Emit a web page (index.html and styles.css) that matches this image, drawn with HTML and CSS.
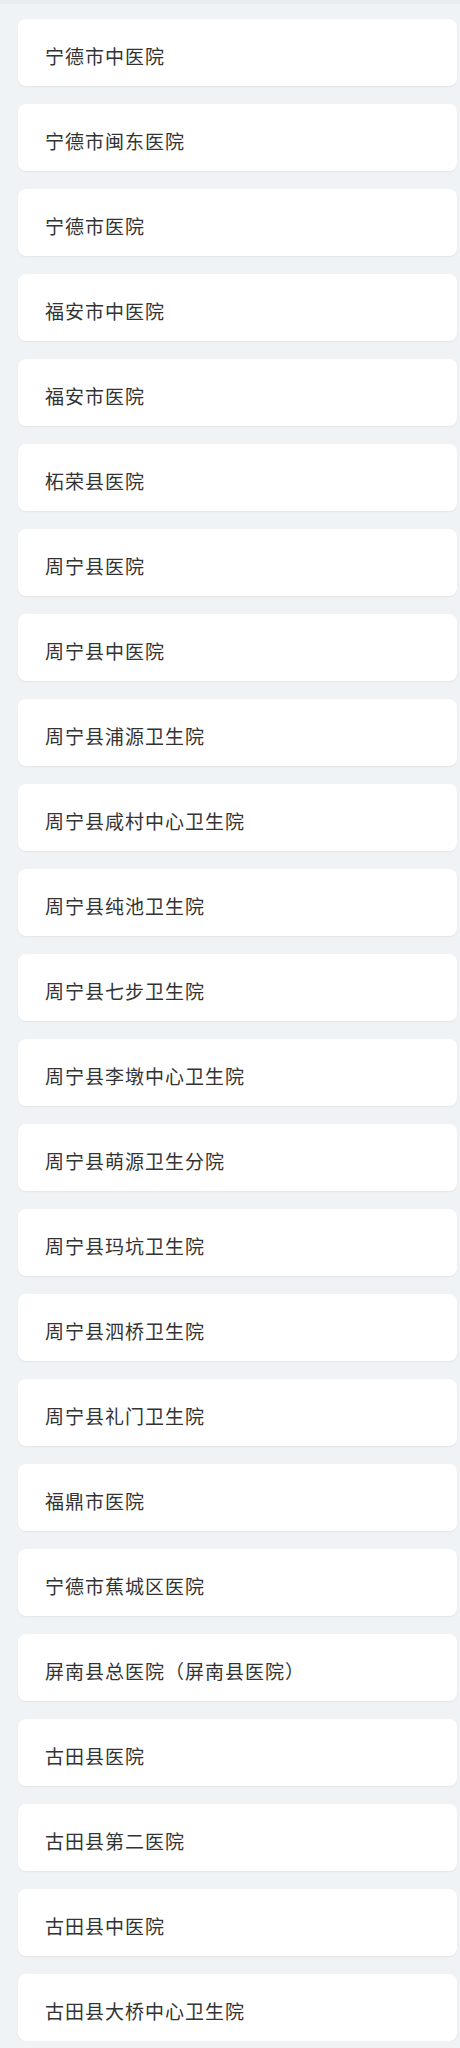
FILE: index.html
```html
<!DOCTYPE html>
<html lang="zh-CN">
<head>
<meta charset="utf-8">
<link rel="stylesheet" href="styles.css">
</head>
<body>
<div class="topbar"></div>
<ul class="list">
<li class="card">宁德市中医院</li>
<li class="card">宁德市闽东医院</li>
<li class="card">宁德市医院</li>
<li class="card">福安市中医院</li>
<li class="card">福安市医院</li>
<li class="card">柘荣县医院</li>
<li class="card">周宁县医院</li>
<li class="card">周宁县中医院</li>
<li class="card">周宁县浦源卫生院</li>
<li class="card">周宁县咸村中心卫生院</li>
<li class="card">周宁县纯池卫生院</li>
<li class="card">周宁县七步卫生院</li>
<li class="card">周宁县李墩中心卫生院</li>
<li class="card">周宁县萌源卫生分院</li>
<li class="card">周宁县玛坑卫生院</li>
<li class="card">周宁县泗桥卫生院</li>
<li class="card">周宁县礼门卫生院</li>
<li class="card">福鼎市医院</li>
<li class="card">宁德市蕉城区医院</li>
<li class="card">屏南县总医院（屏南县医院）</li>
<li class="card">古田县医院</li>
<li class="card">古田县第二医院</li>
<li class="card">古田县中医院</li>
<li class="card">古田县大桥中心卫生院</li>
</ul>
</body>
</html>
```
FILE: styles.css
```css
html, body {
  margin: 0;
  padding: 0;
  background: #f0f3f6;
}
body {
  font-family: "Noto Sans CJK SC", "Noto Sans", sans-serif;
  color: #333;
}
.topbar {
  height: 4px;
  background: #e9edf1;
}
.list {
  list-style: none;
  margin: 0;
  padding: 15px 3px 0 18px;
  display: flex;
  flex-direction: column;
  gap: 18px;
}
.card {
  height: 67px;
  box-sizing: border-box;
  background: #fff;
  border-radius: 8px;
  box-shadow: 0 1px 2px rgba(0, 0, 0, 0.06);
  display: flex;
  align-items: center;
  padding: 5px 0 0 27px;
  font-size: 19px;
  line-height: 1;
  letter-spacing: 1px;
}
```
